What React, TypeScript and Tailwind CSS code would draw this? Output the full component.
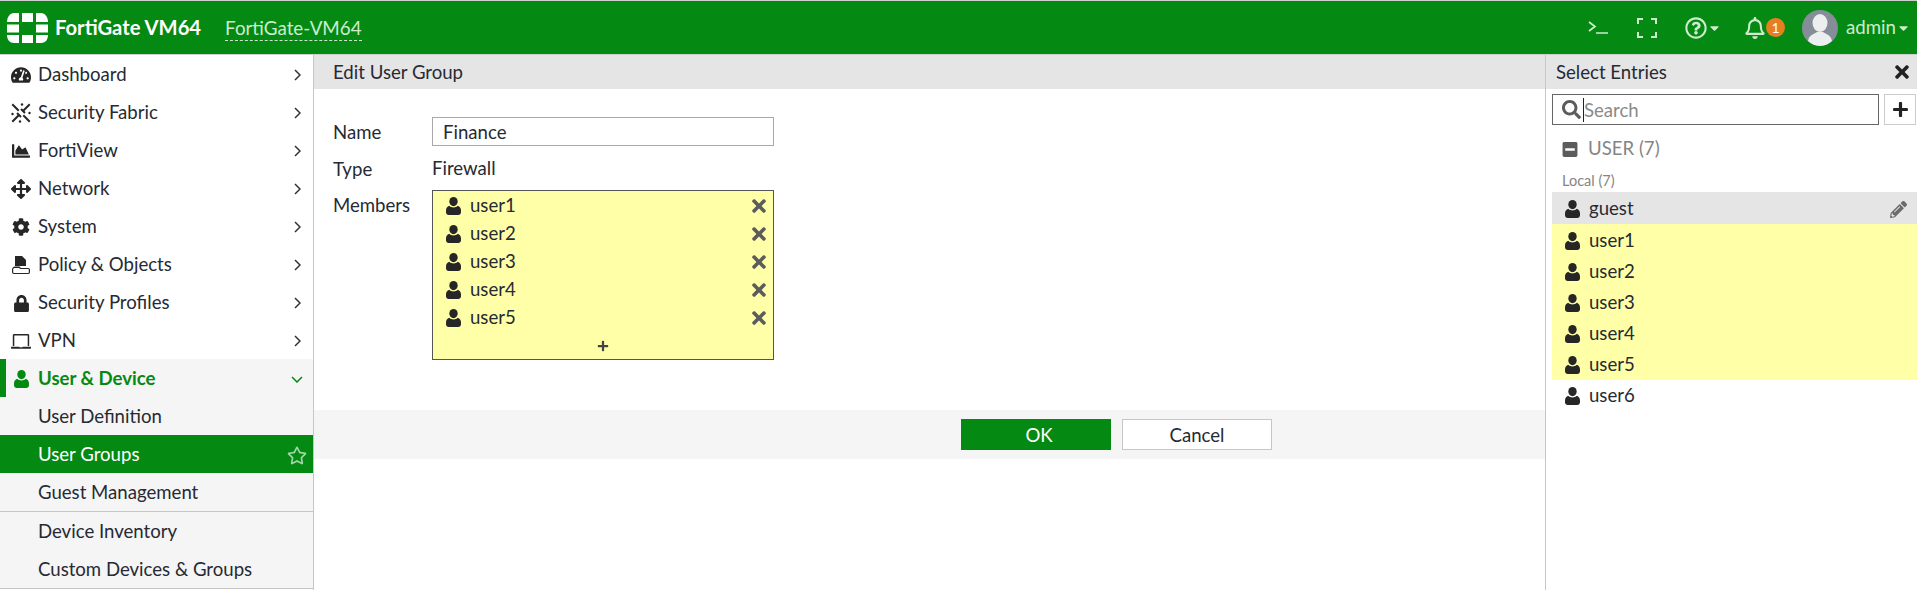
import React from "react";
import {
  FaTachometerAlt, FaChartArea, FaArrowsAlt, FaCog, FaLock, FaRegStar, FaTimes, FaPlus, FaSearch,
  FaPencilAlt, FaMinusSquare, FaRegQuestionCircle, FaRegBell, FaCaretDown,
} from "react-icons/fa";

const UserIcon = ({ className = "" }: { className?: string }) => (
  <svg viewBox="0 0 15 18" className={className} fill="currentColor">
    <ellipse cx="7.500" cy="4.600" rx="4.200" ry="4.600" />
    <path d="M3.200 8.800c1 1 2.600 1.600 4.300 1.600s3.300-.6 4.300-1.600c1.900.7 3.200 2.400 3.200 4.600v1.800c0 1.600-1.200 2.800-2.800 2.800H2.800C1.200 18 0 16.800 0 15.200v-1.800c0-2.200 1.300-3.900 3.200-4.600z" />
  </svg>
);

const Logo = () => (
  <svg viewBox="0 0 41 30" className="h-[30px] w-[41px]" fill="#fff">
    <path d="M7 0h5v9H0C0 4 3 0 7 0z" />
    <rect x="15" y="0" width="11" height="9" />
    <path d="M29 0h5c4 0 7 4 7 9H29z" />
    <rect x="0" y="11.500" width="12" height="8" />
    <rect x="29" y="11.500" width="12" height="8" />
    <path d="M0 22h12v8H7c-4 0-7-3-7-8z" />
    <rect x="15" y="22" width="11" height="8" />
    <path d="M29 22h12c0 5-3 8-7 8h-5z" />
  </svg>
);

const FabricIcon = () => (
  <svg viewBox="0 0 20 20" className="h-[20px] w-[20px]" fill="none" stroke="#262626" strokeWidth="2">
    <path d="M2 2l5 5M13 13l5 5M18 2l-5 5M7 13l-5 5" strokeLinecap="square" />
    <path d="M6 10l4 4M10 6l4 4" />
    <circle cx="1.500" cy="11" r="1.200" fill="#262626" stroke="none" />
    <circle cx="11" cy="1.500" r="1.200" fill="#262626" stroke="none" />
    <circle cx="18.500" cy="10" r="1.200" fill="#262626" stroke="none" />
    <circle cx="9" cy="18.500" r="1.200" fill="#262626" stroke="none" />
  </svg>
);

const PolicyIcon = () => (
  <svg viewBox="0 0 18 18" className="h-[18px] w-[18px]" fill="#262626">
    <path d="M3 0h7l4 4v6H3z" />
    <path d="M3 10.500h4.500l1.500 1.500h7.200a1.800 1.800 0 0 1 1.800 1.800v2.400a1.800 1.800 0 0 1-1.800 1.800H1.800A1.800 1.800 0 0 1 0 16.200v-2.500c0-1.700 1.300-3.200 3-3.200zm-.8 1.500c-.7.300-1 1-1 1.800v2.400c0 .4.300.8.700.8h14.200c.4 0 .7-.4.700-.8v-2.400c0-.4-.3-.8-.7-.8H8.500L7 12z" />
  </svg>
);

const LaptopIcon = () => (
  <svg viewBox="0 0 20 15" className="h-[15px] w-[20px]" fill="#262626">
    <path d="M3 0h14a1.200 1.200 0 0 1 1.200 1.200V12h-1.500V1.500H3.300V12H1.800V1.200A1.200 1.200 0 0 1 3 0z" />
    <path d="M0 12.800h8l.5.500h3l.5-.500h8v1.200a.7.7 0 0 1-.7.700H.7a.7.7 0 0 1-.7-.700z" />
  </svg>
);

const AngleRight = () => (
  <svg viewBox="0 0 7 12" className="ml-auto mr-[12px] h-[12px] w-[7px]" fill="none" stroke="#333" strokeWidth="1.500">
    <path d="M1 1l5 5-5 5" />
  </svg>
);

const side = [
  { label: "Dashboard", icon: <FaTachometerAlt className="h-[18px] w-[20px]" /> },
  { label: "Security Fabric", icon: <FabricIcon /> },
  { label: "FortiView", icon: <FaChartArea className="h-[18px] w-[20px]" /> },
  { label: "Network", icon: <FaArrowsAlt className="h-[20px] w-[20px]" /> },
  { label: "System", icon: <FaCog className="h-[18px] w-[18px]" /> },
  { label: "Policy & Objects", icon: <PolicyIcon /> },
  { label: "Security Profiles", icon: <FaLock className="h-[17px] w-[15px]" /> },
  { label: "VPN", icon: <LaptopIcon /> },
];

const users = ["user1", "user2", "user3", "user4", "user5"];

export default function App() {
  return (
    <div className="flex h-[590px] w-[1917px] flex-col overflow-hidden bg-white text-[18.600px] text-[#262a33] font-['Lato',sans-serif]">
      <header className="flex h-[55px] shrink-0 items-center border-t border-t-[#cfcfcf] border-b border-b-[#cfcfcf] bg-[#048a12] pl-[7px] text-white">
        <Logo />
        <span className="ml-[7px] text-[20.200px] font-bold">FortiGate VM64</span>
        <span className="ml-[24px] border-b border-dashed border-[#c8e6c9] text-[18.800px] leading-[25px] text-[#cdeccf]">FortiGate-VM64</span>
        <div className="ml-auto flex items-center pr-[9px] text-[#cdeccf]">
          <svg viewBox="0 0 20 13" className="h-[13px] w-[20px]" fill="none" stroke="currentColor" strokeWidth="1.700">
            <path d="M1 1l6 4.500L1 10M8 12h12" />
          </svg>
          <svg viewBox="0 0 20 20" className="ml-[29px] h-[20px] w-[20px]" fill="none" stroke="currentColor" strokeWidth="2">
            <path d="M1 6V1h5M14 1h5v5M19 14v5h-5M6 19H1v-5" />
          </svg>
          <FaRegQuestionCircle className="ml-[28px] h-[22px] w-[22px]" />
          <FaCaretDown className="ml-[3px] h-[14px] w-[9px]" />
          <FaRegBell className="ml-[26px] h-[22px] w-[20px]" />
          <span className="ml-[1px] flex h-[19px] w-[19px] items-center justify-center rounded-full bg-[#e67e22] text-[14px] text-white">1</span>
          <span className="ml-[17px] flex h-[36px] w-[36px] items-center justify-center overflow-hidden rounded-full bg-[#858e98]">
            <svg viewBox="0 0 36 36" className="h-[36px] w-[36px]" fill="#eceeef">
              <ellipse cx="18" cy="13" rx="7.500" ry="9" />
              <path d="M6 31c1-6 6-7 9-9h6c3 2 8 3 9 9-3 3-8 5-12 5s-9-2-12-5z" />
            </svg>
          </span>
          <span className="ml-[8px] text-[18.700px]">admin</span>
          <FaCaretDown className="ml-[3px] h-[14px] w-[9px]" />
        </div>
      </header>

      <div className="flex min-h-0 flex-1">
        <nav className="w-[314px] shrink-0 border-r border-r-[#c6c6c6]">
          {side.map((s) => (
            <div key={s.label} className="flex h-[38px] items-center pt-[2px]">
              <span className="flex w-[38px] shrink-0 items-center justify-center pl-[5px] pr-[1px] text-[#262626]">{s.icon}</span>
              <span>{s.label}</span>
              <AngleRight />
            </div>
          ))}
          <div className="bg-[#f5f5f5]">
            <div className="flex h-[38px] items-center border-l-[6px] border-l-[#048a12] pt-[2px] font-bold text-[#048a12]">
              <span className="flex w-[32px] shrink-0 justify-center pr-[1px]"><UserIcon className="h-[18px] w-[15px]" /></span>
              <span>User & Device</span>
              <svg viewBox="0 0 12 7" className="ml-auto mr-[10px] h-[7px] w-[12px]" fill="none" stroke="#048a12" strokeWidth="1.500">
                <path d="M1 1l5 5 5-5" />
              </svg>
            </div>
            <div className="flex h-[38px] items-center pl-[38px] pt-[2px]">User Definition</div>
            <div className="flex h-[38px] items-center bg-[#048a12] pl-[38px] pt-[2px] text-white">
              <span>User Groups</span>
              <FaRegStar className="ml-auto mr-[6px] h-[19px] w-[20px] text-[#9fd6a5]" />
            </div>
            <div className="flex h-[39px] items-center border-b border-b-[#c6c6c6] pl-[38px] pt-[2px]">Guest Management</div>
            <div className="flex h-[38px] items-center pl-[38px] pt-[2px]">Device Inventory</div>
            <div className="flex h-[39px] items-center border-b border-b-[#c6c6c6] pl-[38px] pt-[2px]">Custom Devices & Groups</div>
          </div>
        </nav>

        <main className="flex w-[1231px] shrink-0 flex-col">
          <div className="flex h-[34px] items-center bg-[#e5e5e5] pl-[19px] pt-[2px]">Edit User Group</div>
          <div className="flex h-[321px] flex-col pl-[19px] pt-[28px]">
            <div className="flex h-[29px] items-center">
              <span className="w-[99px] pt-[2px]">Name</span>
              <div className="flex h-[29px] w-[342px] items-center border border-[#a9a9a9] pl-[10px] pt-[3px]">Finance</div>
            </div>
            <div className="mt-[9px] flex h-[28px] items-center">
              <span className="w-[99px] pt-[2px]">Type</span>
              <span>Firewall</span>
            </div>
            <div className="mt-[7px] flex items-start">
              <span className="w-[99px] pt-[2px]">Members</span>
              <div className="flex h-[170px] w-[342px] flex-col border border-[#555] bg-[#ffffa8] px-[13px] pt-[1px]">
                {users.map((u) => (
                  <div key={u} className="flex h-[28px] items-center">
                    <UserIcon className="h-[18px] w-[15px] text-[#262626]" />
                    <span className="ml-[9px]">{u}</span>
                    <FaTimes className="ml-auto mr-[-6px] h-[20px] w-[14px] text-[#5c5c5c]" />
                  </div>
                ))}
                <div className="flex h-[20px] items-end justify-center">
                  <FaPlus className="h-[12px] w-[12px] text-[#444]" />
                </div>
              </div>
            </div>
          </div>
          <div className="flex h-[49px] items-center gap-[11px] bg-[#f5f5f5] pl-[647px]">
            <button className="h-[31px] w-[150px] bg-[#048a12] pl-[6px] pt-[2px] text-white">OK</button>
            <button className="h-[31px] w-[150px] border border-[#c6c6c6] bg-white pt-[2px]">Cancel</button>
          </div>
        </main>

        <aside className="flex min-w-0 flex-1 flex-col border-l border-l-[#c6c6c6]">
          <div className="flex h-[34px] items-center justify-between bg-[#e5e5e5] pl-[10px] pr-[8px]">
            <span className="pt-[2px]">Select Entries</span>
            <FaTimes className="h-[20px] w-[14px] text-[#222]" />
          </div>
          <div className="mt-[5px] flex gap-[5px] pl-[6px] pr-[1px]">
            <div className="flex h-[31px] flex-1 items-center border border-[#666] pl-[9px] text-[#8a8a8a]">
              <FaSearch className="h-[19px] w-[19px] text-[#5c5c5c]" />
              <span className="ml-[2px] h-[24px] w-px bg-[#222]" />
              <span className="pt-[2px]">Search</span>
            </div>
            <div className="flex h-[31px] w-[32px] items-center justify-center border border-[#ccc]">
              <FaPlus className="h-[17px] w-[17px] text-[#222]" />
            </div>
          </div>
          <div className="mt-[9px] flex h-[30px] items-center pl-[16px] text-[#858585]">
            <FaMinusSquare className="h-[17px] w-[16px] text-[#5c5c5c]" />
            <span className="ml-[10px]">USER (7)</span>
          </div>
          <div className="mt-[7px] flex h-[19px] items-center pl-[16px] text-[14.500px] text-[#858585]">Local (7)</div>
          <div className="ml-[6px] mt-[2px] flex flex-col">
            <div className="flex h-[32px] items-center bg-[#e5e5e5] pl-[13px] pr-[10px] pt-[2px]">
              <UserIcon className="h-[18px] w-[15px] text-[#262626]" />
              <span className="ml-[9px]">guest</span>
              <FaPencilAlt className="ml-auto h-[17px] w-[17px] text-[#6b6b6b]" />
            </div>
            <div className="bg-[#ffffa8]">
              {users.map((u) => (
                <div key={u} className="flex h-[31.200px] items-center pl-[13px] pt-[2px]">
                  <UserIcon className="h-[18px] w-[15px] text-[#262626]" />
                  <span className="ml-[9px]">{u}</span>
                </div>
              ))}
            </div>
            <div className="flex h-[31px] items-center pl-[13px] pt-[2px]">
              <UserIcon className="h-[18px] w-[15px] text-[#262626]" />
              <span className="ml-[9px]">user6</span>
            </div>
          </div>
        </aside>
      </div>
    </div>
  );
}
